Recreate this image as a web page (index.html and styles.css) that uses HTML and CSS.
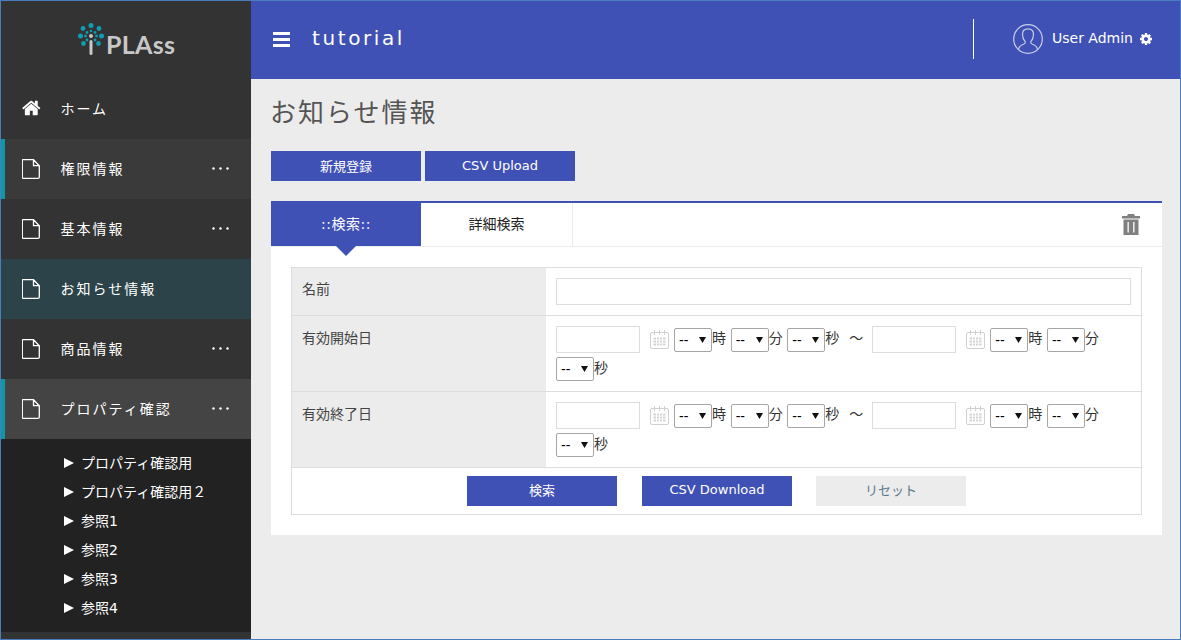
FILE: index.html
```html
<!DOCTYPE html>
<html lang="ja">
<head>
<meta charset="utf-8">
<title>お知らせ情報</title>
<link rel="stylesheet" href="styles.css">
</head>
<body>
<svg class="defs" width="0" height="0" aria-hidden="true">
  <symbol id="doc" viewBox="0 0 18 20"><path d="M1 .7h10.500l5.800 6v11.300q0 1.300-1.300 1.300h-15q-.7 0-.7-1.300v-17q0-.3.700-.3zM11.500.7v6h5.800" fill="none" stroke="#fff" stroke-width="1.300"/></symbol>
  <symbol id="dots" viewBox="0 0 17 3"><circle cx="1.500" cy="1.500" r="1.200" fill="#fff"/><circle cx="8.500" cy="1.500" r="1.200" fill="#fff"/><circle cx="15.500" cy="1.500" r="1.200" fill="#fff"/></symbol>
  <symbol id="cal" viewBox="0 0 19 19"><rect x=".5" y="2.500" width="18" height="16" rx="1.500" fill="#fff" stroke="#d0d0d0"/><path d="M4.500 0v5M9.500 0v5M14.500 0v5" stroke="#d0d0d0"/><path d="M3.500 7.500h12v8h-12z" fill="#d4d4d4"/><path d="M3 10h13M3 13h13M6.500 7v9M9.500 7v9M12.500 7v9" stroke="#fff"/></symbol>
</svg>
<div class="app">
  <aside class="sidebar">
    <div class="logo">
      <svg class="logo-mark" width="26" height="32" viewBox="0 0 26 32">
        <g fill="#0f9db3">
          <circle cx="13" cy="2.500" r="2.500"/><circle cx="5" cy="5.500" r="2.400"/><circle cx="21" cy="5.500" r="2.400"/>
          <circle cx="2.500" cy="13" r="2.500"/><circle cx="23.500" cy="13" r="2.500"/><circle cx="5.500" cy="20.500" r="2.400"/><circle cx="20.500" cy="20.500" r="2.400"/>
          <circle cx="13" cy="8" r="1.300"/><circle cx="9" cy="9.500" r="1.400"/><circle cx="17" cy="9.500" r="1.400"/><circle cx="7.500" cy="13" r="1.400"/><circle cx="18.500" cy="13" r="1.400"/><circle cx="9" cy="17" r="1.400"/><circle cx="17" cy="17" r="1.400"/>
        </g>
        <circle cx="13" cy="13" r="2" fill="#c8c8c8"/>
        <rect x="11.500" y="17" width="3" height="15" rx="1.500" fill="#c8c8c8"/>
      </svg>
      <span class="logo-text">PLAss</span>
    </div>
    <nav>
      <a class="nav-item">
        <svg class="nav-icon home" viewBox="0 0 1792 1792"><path fill="#fff" d="M1408 992v480q0 26-19 45t-45 19h-384v-384h-256v384h-384q-26 0-45-19t-19-45v-480q0-1 .5-3t.5-3l575-474 575 474q1 2 1 6zm223-69l-62 74q-8 9-21 11h-3q-13 0-21-7l-692-577-692 577q-12 8-24 7-13-2-21-11l-62-74q-8-10-7-23.500t11-21.500l719-599q32-26 76-26t76 26l244 204v-195q0-14 9-23t23-9h192q14 0 23 9t9 23v408l219 182q10 8 11 21.500t-7 23.500z"/></svg>
        <span class="nav-label">ホーム</span>
      </a>
      <a class="nav-item marked hover"><svg class="nav-icon"><use href="#doc"/></svg><span class="nav-label">権限情報</span><svg class="nav-dots"><use href="#dots"/></svg></a>
      <a class="nav-item"><svg class="nav-icon"><use href="#doc"/></svg><span class="nav-label">基本情報</span><svg class="nav-dots"><use href="#dots"/></svg></a>
      <a class="nav-item current"><svg class="nav-icon"><use href="#doc"/></svg><span class="nav-label">お知らせ情報</span></a>
      <a class="nav-item"><svg class="nav-icon"><use href="#doc"/></svg><span class="nav-label">商品情報</span><svg class="nav-dots"><use href="#dots"/></svg></a>
      <a class="nav-item marked open"><svg class="nav-icon"><use href="#doc"/></svg><span class="nav-label">プロパティ確認</span><svg class="nav-dots"><use href="#dots"/></svg></a>
      <ul class="subnav">
        <li>プロパティ確認用</li>
        <li>プロパティ確認用２</li>
        <li>参照1</li>
        <li>参照2</li>
        <li>参照3</li>
        <li>参照4</li>
      </ul>
    </nav>
  </aside>
  <div class="main">
    <header class="topbar">
      <span class="burger"><i></i><i></i><i></i></span>
      <span class="tenant">tutorial</span>
      <div class="user">
        <svg class="avatar" width="30" height="30" viewBox="0 0 30 30" fill="none" stroke="#c9cfea" stroke-width="1.200">
          <circle cx="15" cy="15" r="14.300"/>
          <path d="M5.500 25.500c.5-3 2-4.200 5-5.200 1.500-.6 2-1.300 1.800-2.500-1.600-1.700-2.800-4.500-2.800-7.300 0-3.600 2.300-5.700 5.500-5.700s5.500 2.100 5.500 5.700c0 2.800-1.200 5.600-2.800 7.300-.2 1.200.3 1.900 1.800 2.500 3 1 4.500 2.200 5 5.200"/>
        </svg>
        <span class="user-name">User Admin</span>
        <svg class="gear" width="14" height="14" viewBox="0 0 1792 1792"><path fill="#fff" d="M1152 896q0-106-75-181t-181-75-181 75-75 181 75 181 181 75 181-75 75-181zm512-109v222q0 12-8 23t-20 13l-185 28q-19 54-39 91 35 50 107 138 10 12 10 25t-9 23q-27 37-99 108t-94 71q-12 0-26-9l-138-108q-44 23-91 38-16 136-29 186-7 28-36 28h-222q-14 0-24.500-8.500t-11.500-21.500l-28-184q-49-16-90-37l-141 107q-10 9-25 9-14 0-25-11-126-114-165-168-7-10-7-23 0-12 8-23 15-21 51-66.500t54-70.500q-27-50-41-99l-183-27q-13-2-21-12.500t-8-23.500v-222q0-12 8-23t19-13l186-28q14-46 39-92-40-57-107-138-10-12-10-24 0-10 9-23 26-36 98.500-107.500t94.500-71.500q13 0 26 10l138 107q44-23 91-38 16-136 29-186 7-28 36-28h222q14 0 24.500 8.500t11.500 21.500l28 184q49 16 90 37l142-107q9-9 24-9 13 0 25 10 129 119 165 170 7 8 7 22 0 12-8 23-15 21-51 66.500t-54 70.500q26 50 41 98l183 28q13 2 21 12.500t8 23.500z"/></svg>
      </div>
    </header>
    <main class="content">
      <h1 class="page-title">お知らせ情報</h1>
      <div class="actions">
        <button class="btn">新規登録</button>
        <button class="btn">CSV Upload</button>
      </div>
      <section class="panel">
        <div class="tabs">
          <div class="tab active">::検索::</div>
          <div class="tab">詳細検索</div>
          <svg class="trash" width="18" height="21" viewBox="0 0 18 21">
            <path fill="#808080" d="M6 0h6l1 2h5v2.500H0V2h5zM1.500 5.500h15V21h-15zM5.500 8v10.500h1.300V8zM11.200 8v10.500h1.300V8z" fill-rule="evenodd"/>
          </svg>
        </div>
        <div class="search">
          <div class="row">
            <div class="row-label">名前</div>
            <div class="row-value"><input class="field wide" type="text"></div>
          </div>
          <div class="row">
            <div class="row-label date-label">有効開始日</div>
            <div class="row-value dates">
              <input class="field date" type="text"><svg class="cal"><use href="#cal"/></svg>
              <select class="time"><option>--</option></select><span class="unit">時</span>
              <select class="time"><option>--</option></select><span class="unit">分</span>
              <select class="time"><option>--</option></select><span class="unit">秒</span>
              <span class="tilde">～</span>
              <input class="field date" type="text"><svg class="cal"><use href="#cal"/></svg>
              <select class="time"><option>--</option></select><span class="unit">時</span>
              <select class="time"><option>--</option></select><span class="unit">分</span>
              <select class="time"><option>--</option></select><span class="unit">秒</span>
            </div>
          </div>
          <div class="row">
            <div class="row-label date-label">有効終了日</div>
            <div class="row-value dates">
              <input class="field date" type="text"><svg class="cal"><use href="#cal"/></svg>
              <select class="time"><option>--</option></select><span class="unit">時</span>
              <select class="time"><option>--</option></select><span class="unit">分</span>
              <select class="time"><option>--</option></select><span class="unit">秒</span>
              <span class="tilde">～</span>
              <input class="field date" type="text"><svg class="cal"><use href="#cal"/></svg>
              <select class="time"><option>--</option></select><span class="unit">時</span>
              <select class="time"><option>--</option></select><span class="unit">分</span>
              <select class="time"><option>--</option></select><span class="unit">秒</span>
            </div>
          </div>
          <div class="search-actions">
            <button class="btn">検索</button>
            <button class="btn">CSV Download</button>
            <button class="btn muted">リセット</button>
          </div>
        </div>
      </section>
    </main>
  </div>
</div>
</body>
</html>
```
FILE: styles.css
```css
* { box-sizing: border-box; }
html, body { margin: 0; padding: 0; height: 100%; }
body {
  font-family: "DejaVu Sans", "Noto Sans CJK JP", sans-serif;
  font-size: 14px;
  color: #333;
  background: #ececec;
  overflow: hidden;
}
.defs { position: absolute; }
.app {
  display: flex;
  width: 1181px;
  height: 640px;
  border: 1px solid #4a7dbd;
  overflow: hidden;
}

/* sidebar */
.sidebar { width: 250px; flex: none; background: #333; color: #fff; }
.logo {
  height: 78px;
  display: flex;
  align-items: flex-start;
  padding: 22px 0 0 77px;
}
.logo-mark { flex: none; }
.logo-text {
  font-family: Lato, sans-serif;
  font-weight: 700;
  font-size: 25px;
  line-height: 30px;
  letter-spacing: .3px;
  color: #c8c8c8;
  margin: 6px 0 0 2px;
}
.nav-item {
  display: flex;
  align-items: center;
  height: 60px;
  padding-left: 21px;
  position: relative;
}
.nav-item.marked { border-left: 4px solid #0f97a5; padding-left: 17px; }
.hover { background: #3a3a3a; }
.open { background: #444; }
.current { background: #2c4449; }
.nav-icon { width: 18px; height: 20px; flex: none; }
.nav-icon.home { width: 20px; height: 20px; margin: -2px -2px 0 0; }
.nav-label { margin-left: 20.500px; letter-spacing: 2px; white-space: nowrap; line-height: 22px; }
.nav-dots { width: 17px; height: 3px; margin-left: auto; margin-right: 22px; margin-top: -2px; }
.subnav { list-style: none; margin: 0; padding: 10px 0 9px; background: #222; }
.subnav li {
  height: 29px;
  line-height: 29px;
  padding-left: 80px;
  position: relative;
}
.subnav li::before {
  content: "";
  position: absolute;
  left: 63px;
  top: 9px;
  border-left: 10px solid #fff;
  border-top: 5.500px solid transparent;
  border-bottom: 5.500px solid transparent;
}

/* top bar */
.main { flex: 1; min-width: 0; }
.topbar {
  height: 78px;
  background: #3f51b5;
  color: #fff;
  display: flex;
  align-items: center;
  padding-left: 22px;
}
.burger { display: flex; flex-direction: column; gap: 3px; width: 17px; margin-top: -1px; }
.burger i { display: block; height: 3px; background: #fff; }
.tenant { margin-left: 22px; font-size: 20px; letter-spacing: 2.600px; margin-top: -5px; line-height: 26px; }
.user {
  margin-left: auto;
  width: 206px;
  height: 40px;
  margin-top: -2px;
  border-left: 1px solid #fff;
  display: flex;
  align-items: center;
  padding-left: 39px;
  margin-right: 1px;
}
.avatar { flex: none; }
.user-name { margin-left: 9px; font-size: 14px; line-height: 20px; margin-top: -3px; }
.gear { margin-left: 6px; margin-top: -1px; }

/* content */
.content { padding: 0 18px 0 20px; }
.page-title {
  margin: 0 0 0 -1px;
  height: 72px;
  padding-top: 14px;
  font-size: 26px;
  line-height: 40px;
  font-weight: 400;
  letter-spacing: 2px;
  color: #555;
}
.btn {
  width: 150px;
  height: 30px;
  border: 0;
  padding: 0 0 2px;
  background: #3f51b5;
  color: #fff;
  font: inherit;
  font-size: 13px;
}
.btn.muted { background: #ececec; color: #5a7a8c; }
.actions { display: flex; gap: 4px; margin-bottom: 20px; }
.panel { background: #fff; border-top: 2px solid #3f51b5; padding-bottom: 20px; }
.tabs {
  display: flex;
  align-items: stretch;
  height: 44px;
  border-bottom: 1px solid #ececec;
  margin-bottom: 20px;
  padding-right: 22px;
}
.tab {
  width: 150px;
  display: flex;
  align-items: center;
  justify-content: center;
  font-size: 14px;
  color: #222;
  position: relative;
  padding-bottom: 4px;
}
.tab + .tab { width: 152px; border-right: 1px solid #ececec; }
.tab.active { background: #3f51b5; color: #fff; letter-spacing: .5px; }
.tab.active::after {
  content: "";
  position: absolute;
  left: 65px;
  top: 100%;
  border-top: 10px solid #3f51b5;
  border-left: 10px solid transparent;
  border-right: 10px solid transparent;
}
.trash { margin-left: auto; align-self: center; }
.search { margin: 0 20px; border: 1px solid #ddd; }
.row { display: flex; border-bottom: 1px solid #ddd; }
.row-label {
  width: 254px;
  flex: none;
  background: #ececec;
  padding: 9px 10px 11px;
  line-height: 24px;
  color: #444;
}
.date-label { padding-top: 10px; }
.row-value { flex: 1; min-width: 0; padding: 10px; }
.field { border: 1px solid #ddd; background: #fff; padding: 0; margin: 0; height: 27px; display: block; border-radius: 0; }
.wide { width: 100%; }
.date { width: 84px; }
.dates { display: flex; flex-wrap: wrap; align-items: center; row-gap: 3px; }
.cal { width: 19px; height: 19px; margin-left: 10px; margin-right: 5px; margin-top: -1px; flex: none; }
.time {
  appearance: none;
  -webkit-appearance: none;
  width: 38px;
  height: 24px;
  margin: 1px 0 0;
  border: 1px solid #a6a6a6;
  border-radius: 2px;
  padding: 0 0 0 4px;
  font: 14px "Liberation Sans", sans-serif;
  color: #000;
  background: #fff url("data:image/svg+xml,%3Csvg xmlns='http://www.w3.org/2000/svg' width='7' height='6'%3E%3Cpath d='M0 0h7L3.500 6z' fill='%23111'/%3E%3C/svg%3E") no-repeat right 5px center;
}
.unit { width: 14px; margin: -4px 4.670px 0 0; line-height: 24px; }
.unit:last-child { margin-top: -2px; }
.tilde { width: 14px; margin: -4px 9px 0 5.330px; line-height: 24px; }
.search-actions { display: flex; gap: 25px; height: 46px; padding: 8px 0 0 175px; }
.search-actions .btn { padding-bottom: 4px; }
.search-actions .btn:last-child { margin-left: -1px; }
```
